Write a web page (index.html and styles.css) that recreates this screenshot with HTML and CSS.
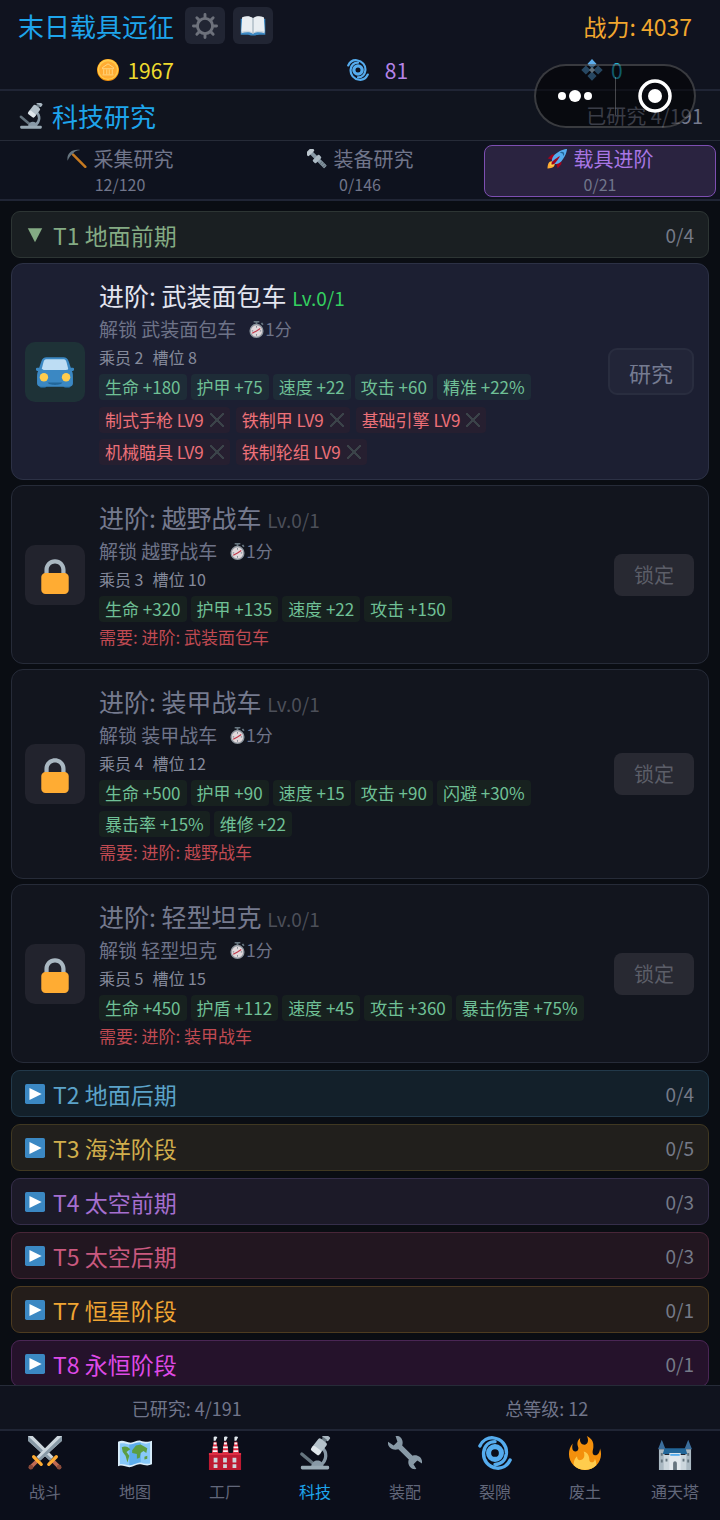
FILE: index.html
```
<!DOCTYPE html>
<html lang="zh-CN">
<head>
    <meta charset="UTF-8">
    <meta name="viewport" content="width=device-width, initial-scale=1.0">
    <title>末日载具远征</title>
    <link rel="stylesheet" href="styles.css">
</head>
<body>
    <!-- Shared icons -->
    <svg class="sprite" aria-hidden="true">
        <symbol id="gear" viewBox="0 0 36 36">
            <g stroke="#6d717b" stroke-width="4" stroke-linecap="round">
                <path d="M18 2v5M18 29v5M2 18h5M29 18h5M6.700 6.700l3.500 3.500M25.800 25.800l3.500 3.500M29.300 6.700l-3.500 3.500M10.200 25.800l-3.500 3.500"/>
            </g>
            <circle cx="18" cy="18" r="10.500" fill="none" stroke="#6d717b" stroke-width="4"/>
        </symbol>
        <symbol id="book" viewBox="0 0 36 36">
            <path fill="#3b88c3" d="M1 8h34v22c-6 0-12 0-14 1h-6c-2-1-8-1-14-1z"/>
            <path fill="#ccd6dd" d="M3 7C9 4 15 5 18 7c3-2 9-3 15 0l1 21c-6-2-13-2-16 1-3-3-10-3-16-1z"/>
            <path fill="#e9eef2" d="M3 6c5-2 11-2 14 1v20c-3-3-10-3-15-1zM33 6c-5-2-11-2-14 1v20c3-3 10-3 15-1z"/>
            <path fill="#99aab5" d="M17.500 7h1v21h-1z"/>
        </symbol>
        <symbol id="coin" viewBox="0 0 36 36">
            <circle cx="18" cy="18" r="18" fill="#f4900c"/>
            <circle cx="18" cy="17.500" r="17" fill="#ffcc4d"/>
            <circle cx="18" cy="18" r="14.500" fill="#ffac33"/>
            <path d="M9 14l9-6 9 6v2H9zM11 17v8M16 17v8M20 17v8M25 17v8M9 26h18" fill="none" stroke="#ffd983" stroke-width="1.500"/>
        </symbol>
        <symbol id="cyclone" viewBox="0 0 36 36">
            <g fill="none" stroke="#55acee" stroke-linecap="round">
                <circle cx="18" cy="18" r="6.800" stroke-width="5.400"/>
                <path stroke-width="3.600" d="M2 10.500C5 4 11 1.500 16 2c9 1 15 8 14 17-1 7-6 11-12 11"/>
                <path stroke-width="3.600" d="M34 25.500C31 32 25 34.500 20 34 11 33 5 26 6 17 7 10 12 6 18 6"/>
            </g>
        </symbol>
        <symbol id="crystal" viewBox="0 0 36 36">
            <path fill="#5dadec" d="M18 0l7.500 8L18 16l-7.500-8z"/>
            <path fill="#4f8fc4" d="M8 10.500l7.500 7.500L8 25.500.5 18zM28 10.500l7.500 7.500-7.500 7.500-7.500-7.500zM18 20.500l7.500 7.500-7.500 7.500-7.500-7.500z"/>
            <path fill="#bdddf4" d="M18 13l5 5-5 5-5-5z"/>
        </symbol>
        <symbol id="microscope" viewBox="0 0 36 36">
            <path fill="none" stroke="#8899a6" stroke-width="3.500" d="M25 12c6 5 6 13-1 19"/>
            <path fill="none" stroke="#66757f" stroke-width="3.500" stroke-linecap="round" d="M4 19l13 11"/>
            <path fill="#8899a6" d="M14 32c1-8 12-8 13 0z"/>
            <rect x="3" y="31.500" width="30" height="4" rx="1.500" fill="#99aab5"/>
            <g transform="rotate(38 24 9)">
                <rect x="20" y="-3" width="8" height="5" rx="1.500" fill="#aab8c2"/>
                <rect x="21.500" y="1" width="5" height="4" fill="#66757f"/>
                <rect x="18.500" y="4" width="11" height="14" rx="2" fill="#b4c1ca"/>
                <rect x="18.500" y="14" width="11" height="6" rx="2" fill="#dfe6eb"/>
            </g>
        </symbol>
        <symbol id="pickaxe" viewBox="0 0 36 36">
            <path stroke="#c77a20" stroke-width="4.500" stroke-linecap="round" d="M11 10l22 22"/>
            <path fill="#66757f" d="M1 21C-1 9 8-1 24 2c-8 1-11 3-13 6-4 3-7 6-10 13z"/>
        </symbol>
        <symbol id="bolt" viewBox="0 0 36 36">
            <g transform="rotate(-45 18 18)">
                <rect x="15" y="0" width="7" height="39" rx="1" fill="#8899a6"/>
                <path fill="#66757f" d="M15 27h7v2h-7zM15 31h7v2h-7zM15 35h7v2h-7z"/>
                <rect x="10" y="-4" width="16" height="8" rx="2" fill="#bcc7cf"/>
                <rect x="10" y="14" width="16" height="8" rx="2" fill="#aab8c2"/>
            </g>
        </symbol>
        <symbol id="rocket" viewBox="0 0 36 36">
            <path fill="#a0041e" d="M1 17l8-7 16 1 1 16-7 8s.001-5.999-6-12-12-6-12-6z"/>
            <path fill="#ffac33" d="M.973 35s-.036-7.979 2.985-11S15 21.187 15 21.187 14.999 29 11.999 32c-3 3-11.026 3-11.026 3z"/>
            <circle cx="8.999" cy="27" r="4" fill="#ffcc4d"/>
            <path fill="#55acee" d="M35.999 0s-10 0-22 10c-6 5-6 14-4 16s11 2 16-4c10-12 10-22 10-22z"/>
            <path fill="#226699" d="M26.999 5a3.996 3.996 0 0 0-3.641 2.360A3.969 3.969 0 0 1 24.999 7a4 4 0 0 1 4 4c0 .586-.133 1.139-.359 1.640A3.993 3.993 0 0 0 30.999 9a4 4 0 0 0-4-4z"/>
            <path fill="#a0041e" d="M8 28s0-4 1-5 13.001-10.999 14-10-9.001 13-10.001 14S8 28 8 28z"/>
        </symbol>
        <symbol id="car" viewBox="0 0 36 36">
            <path fill="#226699" d="M3 26h7v5a2 2 0 0 1-2 2H6a3 3 0 0 1-3-3zM33 26h-7v5a2 2 0 0 0 2 2h2a3 3 0 0 0 3-3z"/>
            <path fill="#3b88c3" d="M10 4h16c2.500 0 4 1 5 4l2 6h2c1.500 0 1.500 3 0 3h-1c1 2 1 4 1 7v5c0 2-2 3-4 3H5c-2 0-4-1-4-3v-5c0-3 0-5 1-7H1c-1.500 0-1.500-3 0-3h2l2-6c1-3 2.500-4 5-4z"/>
            <path fill="#bdddf4" d="M10.500 6h15c1.500 0 3 .5 3.500 3l1.500 6c0 1-1 1-2 1h-21c-1 0-2 0-2-1L7 9c.5-2.500 2-3 3.500-3z"/>
            <path fill="#226699" d="M11 28h14c-1 3-13 3-14 0z"/>
            <circle cx="7.500" cy="23" r="4" fill="#ffcc4d"/>
            <circle cx="28.500" cy="23" r="4" fill="#ffcc4d"/>
        </symbol>
        <symbol id="lock" viewBox="0 0 36 36">
            <path fill="#aab8c2" d="M18 3C12.477 3 8 7.477 8 13v10h4V13c0-3.313 2.686-6 6-6s6 2.687 6 6v10h4V13c0-5.523-4.477-10-10-10z"/>
            <path fill="#ffac33" d="M31 32c0 2.209-1.791 4-4 4H9c-2.209 0-4-1.791-4-4V20c0-2.209 1.791-4 4-4h18c2.209 0 4 1.791 4 4z"/>
        </symbol>
        <symbol id="watch" viewBox="0 0 36 36">
            <path fill="#66757f" d="M12 0h12v3h-4v4h-4V3h-4zM27 5l3-2 3 4-3 2z"/>
            <circle cx="18" cy="21" r="15" fill="#8f979f"/>
            <circle cx="18" cy="21" r="12" fill="#e1d9dc"/>
            <path fill="none" stroke="#c1394a" stroke-width="2.500" d="M9 26l9-5 8-5"/>
            <path stroke="#66757f" stroke-width="2" d="M18 11v3M8 21h3M25 21h3M18 28v3"/>
        </symbol>
        <symbol id="play" viewBox="0 0 36 36">
            <rect width="36" height="36" rx="3" fill="#3b88c3"/>
            <path fill="#fff" d="M8 7l22 11L8 29z"/>
        </symbol>
        <symbol id="down" viewBox="0 0 36 36">
            <path fill="currentColor" d="M5 6h26L18 31z"/>
        </symbol>
        <symbol id="swords" viewBox="0 0 36 36">
            <g id="sword">
                <path fill="#ccd6dd" d="M0 0h5l22 22-4 4L0 5z"/>
                <path fill="#8899a6" d="M0 0l25 24-2 2L0 5z"/>
                <path stroke="#bf6952" stroke-width="4" stroke-linecap="round" d="M27 27l6 6"/>
                <path stroke="#ffac33" stroke-width="3.500" stroke-linecap="round" d="M22 30l8-8"/>
                <circle cx="33" cy="33" r="2.500" fill="#8a4a3a"/>
            </g>
            <use href="#sword" transform="matrix(-1 0 0 1 36 0)"/>
        </symbol>
        <symbol id="map" viewBox="0 0 36 36">
            <path fill="#d9edfa" d="M0 6c5-2 8 0 12 1s8-3 12-2 7 2 12 0v25c-4 2-8 1-12 0s-8 3-12 3-8-3-12-1z"/>
            <path fill="#88c9f9" d="M2 8c4-1 6 0 10 1s8-3 12-2 6 2 10 0v22c-4 1-7 0-10-1s-8 3-12 3-7-2-10-1z"/>
            <path fill="#5dadec" d="M12 9v22c3 0 8-3 12-3V7c-4-1-8 2-12 2z"/>
            <path fill="#5c9e42" d="M4 12c4-2 7 0 9 2l-4 3 3 4-2 7-2-7-3-4zM15 15l4-5 5-1 7 4-1 5-3-2-3 2-1 5-3 1v-5l-5-1zM28 22l3-1v3l-3 1z"/>
        </symbol>
        <symbol id="factory" viewBox="0 0 36 36">
            <path fill="#dd2e44" d="M6 6h3l2 13H4zM17 6h3l2 13h-7zM28 6h3l2 13h-7z"/>
            <path fill="#f5f8fa" d="M6 7h3v2H6zM5 11h5v2H5zM5 15h5v2H5zM17 7h3v2h-3zM16 11h5v2h-5zM16 15h5v2h-5zM28 7h3v2h-3zM27 11h5v2h-5zM27 15h5v2h-5z"/>
            <path fill="#e1e8ed" d="M6 1c3-1 5 0 3 2L8 5H6zM17 1c3-1 5 0 3 2l-1 2h-2zM28 1c3-1 5 0 3 2l-1 2h-2z"/>
            <path fill="#be1931" d="M1 18h34v18H1z"/>
            <path fill="#dd2e44" d="M1 18h34v2H1z"/>
            <path fill="#ccd6dd" d="M6 23h4v5H6zM16 23h4v5h-4zM26 23h4v5h-4zM6 30h4v4H6zM16 30h4v4h-4zM26 30h4v4h-4z"/>
        </symbol>
        <symbol id="wrench" viewBox="0 0 36 36">
            <path fill="#8899a6" d="M8 0c5-1 9 4 7 10l11 11c5-2 11 2 10 8l-5-3-4 4 3 5c-6 1-10-5-8-10L11 14C5 16-1 12 0 6l6 4 4-4z"/>
        </symbol>
        <symbol id="fire" viewBox="0 0 36 36">
            <path fill="#f4900c" d="M35 19c0-2.062-.367-4.039-1.040-5.868-.46 5.389-3.333 8.157-6.335 6.868-2.812-1.208-.917-5.917-.777-8.164.236-3.809-.012-8.169-6.931-11.794 2.875 5.500.333 8.917-2.333 9.125-2.958.231-5.667-2.542-4.667-7.042-3.238 2.386-3.332 6.402-2.333 9 1.042 2.708-.042 4.958-2.583 5.208-2.840.28-4.418-3.041-2.963-8.333C2.520 10.965 1 14.805 1 19c0 9.389 7.611 17 17 17s17-7.611 17-17z"/>
            <path fill="#ffcc4d" d="M28.394 23.999c.148 3.084-2.561 4.293-4.019 3.709-2.106-.843-1.541-2.291-2.083-5.291s-2.625-5.083-5.708-6c2.250 6.333-1.247 8.667-3.080 9.084-1.872.426-3.753-.001-3.968-4.007C7.352 23.668 6 26.676 6 30c0 .368.023.73.055 1.090C9.125 34.124 13.342 36 18 36s8.875-1.876 11.945-4.910c.032-.36.055-.722.055-1.090 0-2.187-.584-4.236-1.606-6.001z"/>
        </symbol>
        <symbol id="castle" viewBox="0 0 36 36">
            <path fill="#3b6e9c" d="M4 4l4 10H0zM32 4l4 10h-8z"/>
            <path fill="#aab8c2" d="M1 14h6v22H1zM29 14h6v22h-6z"/>
            <path fill="#ccd6dd" d="M6 20h24v16H6z"/>
            <path fill="#226699" d="M7 13h22l2 6H5z"/>
            <path fill="#e1e8ed" d="M12 18h12v18H12z"/>
            <path fill="#55acee" d="M13 19h10v2H13z"/>
            <path fill="#66757f" d="M16 36v-7c0-3 4-3 4 0v7zM3 18h2v3H3zM31 18h2v3h-2zM3 25h2v3H3zM31 25h2v3h-2zM8 24h2v3H8zM26 24h2v3h-2z"/>
        </symbol>
    </svg>

    <header class="top-bar">
        <div class="title-row">
            <h1>末日载具远征</h1>
            <button class="icon-btn" aria-label="设置"><svg class="icon-m"><use href="#gear"/></svg></button>
            <button class="icon-btn" aria-label="图鉴"><svg class="icon-m"><use href="#book"/></svg></button>
            <span class="power">战力: 4037</span>
        </div>
        <div class="resources">
            <span class="gold"><svg><use href="#coin"/></svg>1967</span>
            <span class="rift"><svg><use href="#cyclone"/></svg>81</span>
            <span class="gem"><svg><use href="#crystal"/></svg>0</span>
        </div>
    </header>

    <div class="section-head">
        <svg class="icon-m"><use href="#microscope"/></svg>
        <h2>科技研究</h2>
        <span class="done">已研究 4/191</span>
    </div>

    <div class="tabs">
        <button class="tab">
            <span class="tab-name"><svg class="icon-s"><use href="#pickaxe"/></svg>采集研究</span>
            <span class="tab-count">12/120</span>
        </button>
        <button class="tab">
            <span class="tab-name"><svg class="icon-s"><use href="#bolt"/></svg>装备研究</span>
            <span class="tab-count">0/146</span>
        </button>
        <button class="tab active">
            <span class="tab-name"><svg class="icon-s"><use href="#rocket"/></svg>载具进阶</span>
            <span class="tab-count">0/21</span>
        </button>
    </div>

    <main class="tech-list">
        <section class="tier-group">
            <button class="tier t1"><svg class="icon-s"><use href="#down"/></svg>T1 地面前期<span class="count">0/4</span></button>

            <article class="card open">
                <div class="thumb"><svg><use href="#car"/></svg></div>
                <div class="info">
                    <h3>进阶: 武装面包车 <small>Lv.0/1</small></h3>
                    <p class="unlock">解锁 武装面包车<svg><use href="#watch"/></svg><span>1分</span></p>
                    <p class="slots"><span>乘员 2</span><span>槽位 8</span></p>
                    <div class="stats">
                        <span>生命 +180</span><span>护甲 +75</span><span>速度 +22</span><span>攻击 +60</span><span>精准 +22%</span>
                    </div>
                    <div class="needs">
                        <span>制式手枪 LV9<i></i></span><span>铁制甲 LV9<i></i></span><span>基础引擎 LV9<i></i></span><span>机械瞄具 LV9<i></i></span><span>铁制轮组 LV9<i></i></span>
                    </div>
                </div>
                <button class="research">研究</button>
            </article>

            <article class="card">
                <div class="thumb"><svg><use href="#lock"/></svg></div>
                <div class="info">
                    <h3>进阶: 越野战车 <small>Lv.0/1</small></h3>
                    <p class="unlock">解锁 越野战车<svg><use href="#watch"/></svg><span>1分</span></p>
                    <p class="slots"><span>乘员 3</span><span>槽位 10</span></p>
                    <div class="stats">
                        <span>生命 +320</span><span>护甲 +135</span><span>速度 +22</span><span>攻击 +150</span>
                    </div>
                    <p class="require">需要: 进阶: 武装面包车</p>
                </div>
                <button class="locked" disabled>锁定</button>
            </article>

            <article class="card">
                <div class="thumb"><svg><use href="#lock"/></svg></div>
                <div class="info">
                    <h3>进阶: 装甲战车 <small>Lv.0/1</small></h3>
                    <p class="unlock">解锁 装甲战车<svg><use href="#watch"/></svg><span>1分</span></p>
                    <p class="slots"><span>乘员 4</span><span>槽位 12</span></p>
                    <div class="stats">
                        <span>生命 +500</span><span>护甲 +90</span><span>速度 +15</span><span>攻击 +90</span><span>闪避 +30%</span><span>暴击率 +15%</span><span>维修 +22</span>
                    </div>
                    <p class="require">需要: 进阶: 越野战车</p>
                </div>
                <button class="locked" disabled>锁定</button>
            </article>

            <article class="card">
                <div class="thumb"><svg><use href="#lock"/></svg></div>
                <div class="info">
                    <h3>进阶: 轻型坦克 <small>Lv.0/1</small></h3>
                    <p class="unlock">解锁 轻型坦克<svg><use href="#watch"/></svg><span>1分</span></p>
                    <p class="slots"><span>乘员 5</span><span>槽位 15</span></p>
                    <div class="stats">
                        <span>生命 +450</span><span>护盾 +112</span><span>速度 +45</span><span>攻击 +360</span><span>暴击伤害 +75%</span>
                    </div>
                    <p class="require">需要: 进阶: 装甲战车</p>
                </div>
                <button class="locked" disabled>锁定</button>
            </article>
        </section>

        <button class="tier t2"><svg class="icon-s"><use href="#play"/></svg>T2 地面后期<span class="count">0/4</span></button>
        <button class="tier t3"><svg class="icon-s"><use href="#play"/></svg>T3 海洋阶段<span class="count">0/5</span></button>
        <button class="tier t4"><svg class="icon-s"><use href="#play"/></svg>T4 太空前期<span class="count">0/3</span></button>
        <button class="tier t5"><svg class="icon-s"><use href="#play"/></svg>T5 太空后期<span class="count">0/3</span></button>
        <button class="tier t7"><svg class="icon-s"><use href="#play"/></svg>T7 恒星阶段<span class="count">0/1</span></button>
        <button class="tier t8"><svg class="icon-s"><use href="#play"/></svg>T8 永恒阶段<span class="count">0/1</span></button>
    </main>

    <div class="summary">
        <span>已研究: 4/191</span>
        <span>总等级: 12</span>
    </div>

    <nav class="bottom-nav">
        <a href="#"><svg><use href="#swords"/></svg>战斗</a>
        <a href="#"><svg><use href="#map"/></svg>地图</a>
        <a href="#"><svg><use href="#factory"/></svg>工厂</a>
        <a href="#" class="current"><svg><use href="#microscope"/></svg>科技</a>
        <a href="#"><svg><use href="#wrench"/></svg>装配</a>
        <a href="#"><svg><use href="#cyclone"/></svg>裂隙</a>
        <a href="#"><svg><use href="#fire"/></svg>废土</a>
        <a href="#"><svg><use href="#castle"/></svg>通天塔</a>
    </nav>

    <!-- Mini program capsule, floats over the header -->
    <div class="capsule">
        <button aria-label="更多">
            <svg viewBox="0 0 36 36" fill="#fff"><circle cx="5" cy="18" r="4"/><circle cx="18" cy="18" r="6"/><circle cx="31" cy="18" r="4"/></svg>
        </button>
        <button aria-label="关闭">
            <svg viewBox="0 0 36 36"><circle cx="18" cy="18" r="15" fill="none" stroke="#fff" stroke-width="3.500"/><circle cx="18" cy="18" r="7" fill="#fff"/></svg>
        </button>
    </div>
</body>
</html>
```
FILE: styles.css
```
* {
    box-sizing: border-box;
}

body {
    margin: 0;
    height: 100vh;
    display: flex;
    flex-direction: column;
    background: #0a0d13;
    color: #757a8e;
    font-family: "Noto Sans CJK SC", sans-serif;
    font-size: 17px;
}

h1, h2, h3, p {
    margin: 0;
    font-weight: normal;
}

button {
    font-family: inherit;
    color: inherit;
    padding: 0;
    cursor: pointer;
}

svg {
    flex: none;
}

.sprite {
    position: absolute;
    width: 0;
    height: 0;
}

.icon-s {
    width: 20px;
    height: 20px;
}

.icon-m {
    width: 26px;
    height: 26px;
}

/* Header */
.top-bar {
    flex: none;
    background: #10131f;
    border-bottom: 2px solid #202535;
}

.title-row {
    display: flex;
    align-items: center;
    gap: 8px;
    height: 51px;
    padding: 0 28px 0 18px;
}

.title-row h1 {
    font-size: 26px;
    color: #1ea5ec;
    line-height: 38px;
    margin-right: 3px;
}

.icon-btn {
    display: flex;
    align-items: center;
    justify-content: center;
    width: 40px;
    height: 37px;
    border: none;
    border-radius: 6px;
    background: #212533;
}

.power {
    margin-left: auto;
    font-size: 23px;
    color: #f2a72e;
}

.resources {
    display: flex;
    justify-content: space-around;
    height: 38px;
    padding: 0 11px;
    font-size: 21px;
}

.resources span {
    display: flex;
    align-items: center;
    gap: 8px;
}

.resources .rift {
    gap: 16px;
}

.resources svg {
    width: 22px;
    height: 22px;
}

.gold { color: #eedb2e; }
.rift { color: #b583e8; }
.gem { color: #1fb4d4; }

.section-head {
    flex: none;
    display: flex;
    align-items: center;
    gap: 8px;
    height: 50px;
    padding: 0 17px 0 18px;
    background: #10141e;
    border-bottom: 1px solid #262b38;
}

.section-head h2 {
    font-size: 26px;
    color: #1ea5ec;
    line-height: 38px;
}

.done {
    margin-left: auto;
    font-size: 20px;
}

/* Tabs */
.tabs {
    flex: none;
    display: grid;
    grid-template-columns: repeat(3, 1fr);
    height: 60px;
    background: #0e121e;
    border-bottom: 2px solid #202535;
}

.tab {
    display: flex;
    flex-direction: column;
    align-items: center;
    justify-content: center;
    margin: 4px 4px 2px;
    border: 1px solid transparent;
    border-radius: 8px;
    background: none;
    color: #70758a;
}

.tab-name {
    display: flex;
    align-items: center;
    gap: 7px;
    font-size: 20px;
    line-height: 26px;
}

.tab-count {
    font-size: 16px;
    line-height: 24px;
    color: #70758a;
}

.tab.active {
    background: #2a2340;
    border-color: #7d4fb2;
    color: #a876e4;
}

/* Tech list */
.tech-list {
    flex: 1;
    min-height: 0;
    overflow-y: auto;
    scrollbar-width: none;
    display: flex;
    flex-direction: column;
    gap: 7px;
    padding: 10px 11px;
}

.tier-group {
    display: flex;
    flex-direction: column;
    gap: 5px;
}

.tier {
    flex: none;
    display: flex;
    align-items: center;
    gap: 8px;
    width: 100%;
    height: 47px;
    padding: 0 14px 0 13px;
    border: 1px solid;
    border-radius: 9px;
    font-size: 23px;
    line-height: 34px;
}

.tier .count {
    margin-left: auto;
    font-size: 19px;
    color: #757a88;
}

.t1 { color: #84ab84; background: #1a1f22; border-color: #2d3534; }
.t2 { color: #5ba3c9; background: #13202a; border-color: #22394a; }
.t3 { color: #d0ae4c; background: #211f1c; border-color: #403821; }
.t4 { color: #a56fcf; background: #1c1a28; border-color: #352e4a; }
.t5 { color: #c9597f; background: #221620; border-color: #482638; }
.t7 { color: #f0a533; background: #241d1a; border-color: #4d3b20; }
.t8 { color: #df4ae6; background: #25122b; border-color: #4a2655; }

.card {
    flex: none;
    display: flex;
    align-items: center;
    gap: 14px;
    padding: 14px 14px 14px 13px;
    border: 1px solid #262b38;
    border-radius: 12px;
    background: #12151e;
}

.card.open {
    background: #1c1f32;
    border-color: #2c3145;
}

.thumb {
    flex: none;
    display: flex;
    align-items: center;
    justify-content: center;
    width: 60px;
    height: 60px;
    border-radius: 10px;
    background: #22232d;
}

.thumb svg {
    width: 38px;
    height: 38px;
}

.open .thumb {
    background: #1e3237;
}

.info {
    flex: 1;
    min-width: 0;
}

.info h3 {
    font-size: 25px;
    line-height: 34px;
    color: #757a8e;
}

.info h3 small {
    font-size: 19px;
    line-height: 1;
    color: #4c4f59;
}

.open h3 {
    color: #e3e5f0;
}

.open h3 small {
    color: #34d060;
}

.unlock {
    display: flex;
    align-items: center;
    margin-top: 4px;
    font-size: 19px;
    line-height: 26px;
    color: #6e7388;
}

.unlock span {
    font-size: 17px;
}

.unlock svg {
    width: 17px;
    height: 17px;
    margin-left: 12px;
}

.slots {
    display: flex;
    gap: 9px;
    margin-top: 2px;
    line-height: 26px;
    font-size: 16px;
    color: #858a9b;
}

.stats, .needs {
    display: flex;
    flex-wrap: wrap;
    margin-top: 4px;
    font-size: 17px;
    line-height: 26px;
}

.stats {
    gap: 5px 4px;
}

.stats span {
    padding: 0 6px;
    border-radius: 4px;
    background: #17211f;
    color: #6fc096;
}

.open .stats span {
    background: #1e2c37;
}

.needs {
    gap: 6px;
    margin-top: 7px;
}

.needs span {
    display: flex;
    align-items: center;
    gap: 6px;
    padding: 0 6px;
    border-radius: 4px;
    background: #261f30;
    color: #ec7078;
}

/* small cross: requirement not met */
.needs i {
    width: 14px;
    height: 14px;
    background:
        linear-gradient(45deg, transparent 46%, #3b4349 46%, #3b4349 54%, transparent 54%),
        linear-gradient(-45deg, transparent 46%, #3b4349 46%, #3b4349 54%, transparent 54%);
}

.require {
    margin-top: 3px;
    font-size: 17px;
    line-height: 24px;
    color: #c04a52;
}

.research {
    width: 86px;
    height: 47px;
    border: 2px solid #292d3f;
    border-radius: 9px;
    background: #222538;
    color: #757b91;
    font-size: 22px;
    line-height: 32px;
}

.locked {
    width: 80px;
    height: 42px;
    border: none;
    border-radius: 8px;
    background: #282932;
    color: #5c5e68;
    font-size: 20px;
    line-height: 30px;
}

/* Footer */
.summary {
    flex: none;
    display: flex;
    align-items: center;
    justify-content: space-around;
    height: 44px;
    border-top: 1px solid #262b38;
    background: #10131e;
    color: #70758a;
    font-size: 18px;
}

.bottom-nav {
    flex: none;
    display: grid;
    grid-template-columns: repeat(8, 1fr);
    height: 91px;
    border-top: 2px solid #202535;
    background: #0b0e1a;
}

.bottom-nav a {
    display: flex;
    flex-direction: column;
    align-items: center;
    gap: 8px;
    padding-top: 5px;
    font-size: 16px;
    line-height: 26px;
    color: #62677a;
    text-decoration: none;
}

.bottom-nav svg {
    width: 34px;
    height: 34px;
}

.bottom-nav .current {
    color: #1ea5ec;
}

.capsule {
    position: fixed;
    top: 64px;
    right: 24px;
    display: flex;
    align-items: center;
    width: 162px;
    height: 64px;
    border: 2px solid rgba(255, 255, 255, 0.2);
    border-radius: 32px;
    background: rgba(0, 0, 0, 0.5);
}

.capsule button {
    display: flex;
    align-items: center;
    justify-content: center;
    flex: 1;
    height: 38px;
    border: none;
    background: none;
}

.capsule button + button {
    border-left: 1px solid rgba(255, 255, 255, 0.25);
}

.capsule svg {
    width: 36px;
    height: 36px;
}
```
